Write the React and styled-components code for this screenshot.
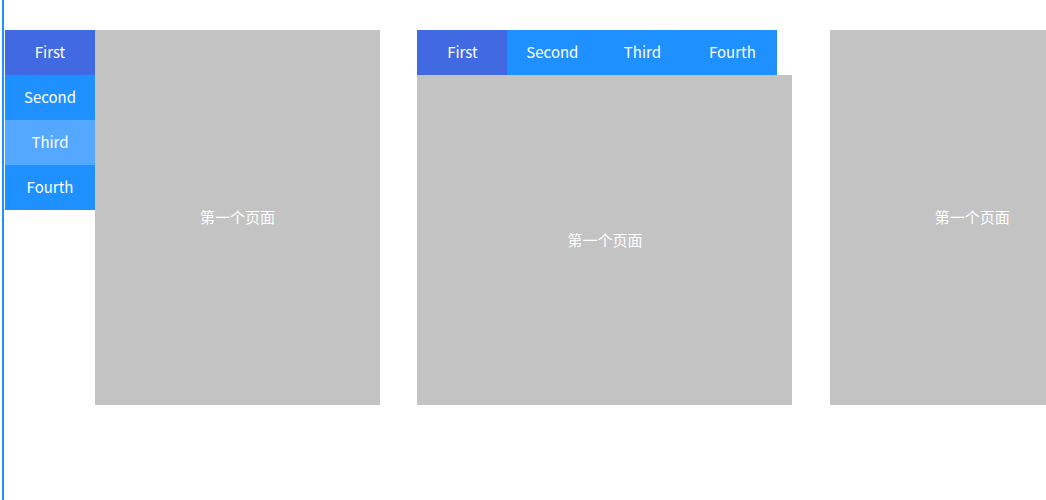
import React, { useState } from "react";
import styled, { createGlobalStyle } from "styled-components";

const Global = createGlobalStyle`
  html, body { margin: 0; padding: 0; background: #fff; }
  body { font-family: "Noto Sans CJK SC", "Noto Sans", sans-serif; overflow: hidden; }
`;

const Page = styled.div`
  margin-left: 2px;
  border-left: 2px solid #1e90ff;
  min-height: 100vh;
  box-sizing: border-box;
  padding: 30px 0 0 1px;
  display: flex;
  gap: 37.4px;
  align-items: flex-start;
  width: max-content;
`;

const Widget = styled.div`
  display: flex;
  flex-direction: ${(p) => p.$dir};
  width: 375px;
  height: 375px;
  flex-shrink: 0;
`;

const TabList = styled.div`
  display: flex;
  flex-direction: ${(p) => (p.$vertical ? "column" : "row")};
  flex-shrink: 0;
`;

const Tab = styled.div`
  width: 90px;
  height: 45px;
  display: flex;
  align-items: center;
  justify-content: center;
  color: #fff;
  font-size: 15px;
  line-height: 1;
  padding-bottom: 2px;
  box-sizing: border-box;
  background: ${(p) => (p.$active ? "#4169e1" : p.$hover ? "#55a8ff" : "#1e90ff")};
  cursor: pointer;
`;

const Panel = styled.div`
  flex: 1;
  background: #c3c3c3;
  color: #fff;
  font-size: 15px;
  line-height: 1;
  padding-bottom: 2px;
  display: flex;
  align-items: center;
  justify-content: center;
`;

const tabs = ["First", "Second", "Third", "Fourth"];

function Tabs({ dir, vertical, hoverIndex }) {
  const [active, setActive] = useState(0);
  return (
    <Widget $dir={dir}>
      <TabList $vertical={vertical}>
        {tabs.map((t, i) => (
          <Tab key={t} $active={i === active} $hover={i === hoverIndex} onClick={() => setActive(i)}>
            {t}
          </Tab>
        ))}
      </TabList>
      <Panel>第一个页面</Panel>
    </Widget>
  );
}

export default function App() {
  return (
    <>
      <Global />
      <Page>
        <Tabs dir="row" vertical hoverIndex={2} />
        <Tabs dir="column" />
        <Tabs dir="row-reverse" vertical />
      </Page>
    </>
  );
}
